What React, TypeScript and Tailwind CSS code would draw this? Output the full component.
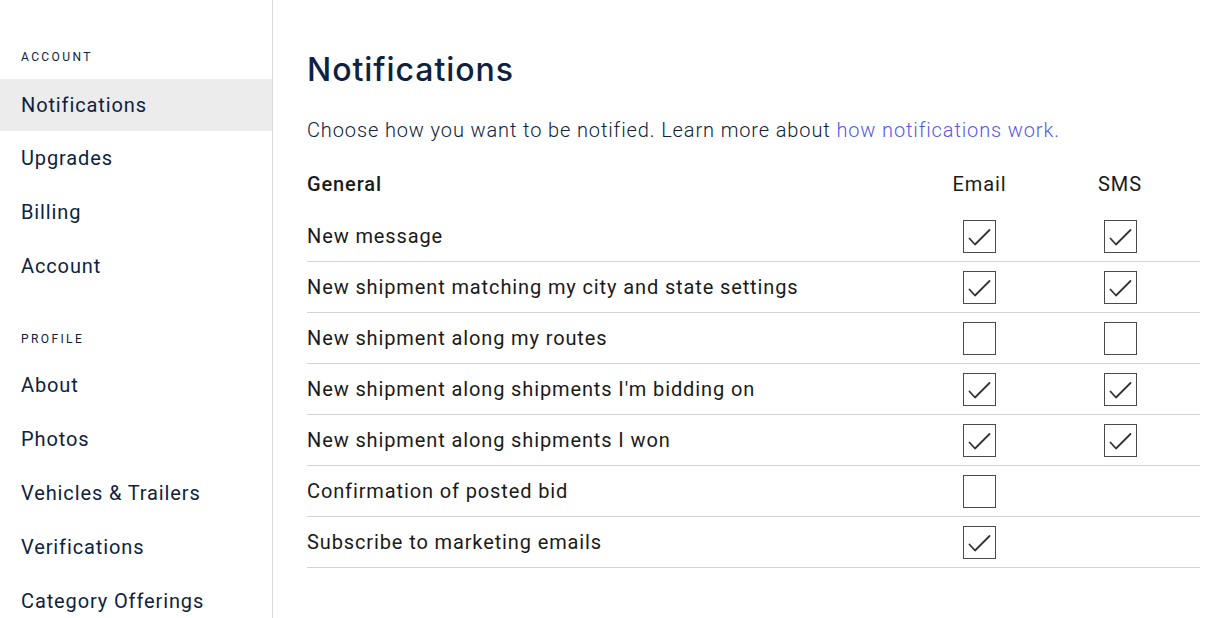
import { useState } from 'react';

type Row = { label: string; email: boolean; sms?: boolean };

const rows: Row[] = [
  { label: 'New message', email: true, sms: true },
  { label: 'New shipment matching my city and state settings', email: true, sms: true },
  { label: 'New shipment along my routes', email: false, sms: false },
  { label: "New shipment along shipments I'm bidding on", email: true, sms: true },
  { label: 'New shipment along shipments I won', email: true, sms: true },
  { label: 'Confirmation of posted bid', email: false },
  { label: 'Subscribe to marketing emails', email: true },
];

const accountLinks = ['Notifications', 'Upgrades', 'Billing', 'Account'];
const profileLinks = ['About', 'Photos', 'Vehicles & Trailers', 'Verifications', 'Category Offerings'];

function Check({ checked, onToggle }: { checked: boolean; onToggle: () => void }) {
  return (
    <button
      onClick={onToggle}
      className="w-[33px] h-[33px] border border-[#4a4a4a] bg-white flex items-center justify-center"
    >
      {checked && (
        <svg width="31" height="31" viewBox="0 0 31 31" fill="none">
          <path d="M5.5 17.5 L11 23.5 L25.5 9" stroke="#333" strokeWidth="1.8" strokeLinecap="round" strokeLinejoin="round" />
        </svg>
      )}
    </button>
  );
}

export default function App() {
  const [state, setState] = useState(rows);

  const toggle = (i: number, key: 'email' | 'sms') =>
    setState((s) => s.map((r, j) => (j === i ? { ...r, [key]: !r[key] } : r)));

  return (
    <div className="flex h-[618px] overflow-hidden bg-white font-['Roboto',sans-serif] tracking-[0.88px]">
      {/* Sidebar */}
      <aside className="w-[273px] shrink-0 border-r border-[#d9d9d9] pt-[49px] text-[#0e2240]">
        <p className="px-[21px] text-[12px] tracking-[0.2em] leading-4 mb-[14px]">ACCOUNT</p>
        {accountLinks.map((l, i) => (
          <div
            key={l}
            className={`flex items-center px-[21px] text-[20px] ${i === 0 ? 'bg-[#ececec] h-[52px]' : 'h-[54px]'}`}
          >
            {l}
          </div>
        ))}
        <p className="px-[21px] text-[12px] tracking-[0.2em] leading-4 mt-[38px] mb-[11px]">PROFILE</p>
        {profileLinks.map((l) => (
          <div key={l} className="h-[54px] flex items-center px-[21px] text-[20px]">
            {l}
          </div>
        ))}
      </aside>

      {/* Main */}
      <main className="flex-1 pl-[34px] pr-[15px] pt-[50px]">
        <h1 className="font-['Inter',sans-serif] font-medium text-[32px] leading-10 text-[#0e2240] tracking-[0.03em]">
          Notifications
        </h1>
        <p className="mt-[28px] text-[20px] font-light text-[#0e2240] leading-6">
          Choose how you want to be notified. Learn more about{' '}
          <a className="text-[#5757e8]">how notifications work.</a>
        </p>

        <div className="mt-[15px] text-[#1a1a1a]">
          <div className="grid grid-cols-[1fr_121px_160px] h-[54px] items-center text-[20px]">
            <span className="font-medium">General</span>
            <span className="text-center">Email</span>
            <span className="text-center">SMS</span>
          </div>
          {state.map((r, i) => (
            <div
              key={r.label}
              className="grid grid-cols-[1fr_121px_160px] h-[51px] items-center text-[20px] border-b border-[#d4d4d4]"
            >
              <span>{r.label}</span>
              <div className="flex justify-center">
                <Check checked={r.email} onToggle={() => toggle(i, 'email')} />
              </div>
              <div className="flex justify-center">
                {r.sms !== undefined && <Check checked={r.sms} onToggle={() => toggle(i, 'sms')} />}
              </div>
            </div>
          ))}
        </div>
      </main>
    </div>
  );
}
